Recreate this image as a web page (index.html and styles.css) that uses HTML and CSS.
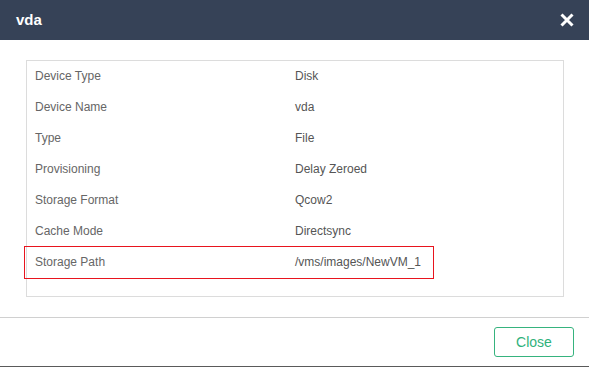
FILE: index.html
```html
<!DOCTYPE html>
<html>
<head>
<meta charset="utf-8">
<link rel="stylesheet" href="styles.css">
</head>
<body>
<div class="modal">
  <div class="header">
    <span class="title">vda</span>
    <svg class="close-x" width="14" height="14" viewBox="0 0 14 14"><path d="M1.5 1.5L12.5 12.5M12.5 1.5L1.5 12.5" stroke="#fff" stroke-width="3" stroke-linecap="butt"/></svg>
  </div>
  <div class="body">
    <div class="info">
      <div class="row"><span class="label">Device Type</span><span class="value">Disk</span></div>
      <div class="row"><span class="label">Device Name</span><span class="value">vda</span></div>
      <div class="row"><span class="label">Type</span><span class="value">File</span></div>
      <div class="row"><span class="label">Provisioning</span><span class="value">Delay Zeroed</span></div>
      <div class="row"><span class="label">Storage Format</span><span class="value">Qcow2</span></div>
      <div class="row"><span class="label">Cache Mode</span><span class="value">Directsync</span></div>
      <div class="row highlight"><span class="label">Storage Path</span><span class="value">/vms/images/NewVM_1</span></div>
    </div>
  </div>
  <div class="footer">
    <button class="btn-close">Close</button>
  </div>
</div>
</body>
</html>
```
FILE: styles.css
```css
html, body {
  margin: 0;
  padding: 0;
  background: #fff;
}
body {
  font-family: "Liberation Sans", Arial, sans-serif;
  width: 589px;
  height: 367px;
  overflow: hidden;
}
.modal {
  height: 366px;
  border-bottom: 1px solid #5a5a5a;
  display: flex;
  flex-direction: column;
}
.header {
  height: 40px;
  background: #364257;
  display: flex;
  align-items: center;
  justify-content: space-between;
  padding: 0 15px 0 16px;
}
.title {
  color: #fff;
  font-size: 15px;
  font-weight: bold;
  line-height: 20px;
}
.close-x {
  display: block;
}
.body {
  padding: 20px 25px 20px 26px;
}
.info {
  border: 1px solid #dcdcdc;
  padding-top: 1px;
  padding-bottom: 17px;
}
.row {
  display: grid;
  grid-template-columns: 1fr 1fr;
  height: 31px;
  line-height: 29px;
  font-size: 12px;
  position: relative;
}
.label {
  color: #666;
  padding-left: 8px;
}
.value {
  color: #555;
}
.highlight::after {
  content: "";
  position: absolute;
  left: -3px;
  top: -2px;
  width: 408px;
  height: 31px;
  border: 1px solid #e8141e;
}
.footer {
  flex: 1;
  border-top: 1px solid #d0d0d0;
  display: flex;
  justify-content: flex-end;
  align-items: flex-start;
  padding: 9px 15px 0 0;
}
.btn-close {
  width: 80px;
  height: 30px;
  border: 1px solid #36b37e;
  border-radius: 3px;
  background: #fff;
  color: #2fb27b;
  font-family: "Liberation Sans", Arial, sans-serif;
  font-size: 14px;
  padding: 0;
}
```
